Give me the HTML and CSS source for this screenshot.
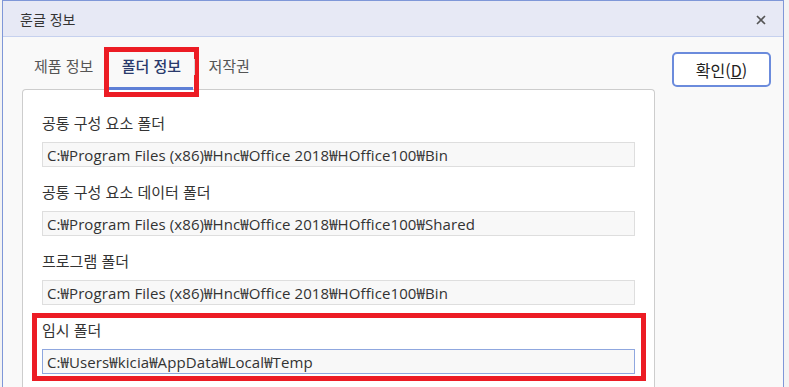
FILE: index.html
```html
<!DOCTYPE html>
<html lang="ko">
<head>
    <meta charset="UTF-8">
    <title>훈글 정보</title>
    <link rel="stylesheet" href="styles.css">
</head>
<body>
<div class="window">
    <div class="titlebar">
        <span class="title">훈글 정보</span>
        <svg class="close" width="10" height="10" viewBox="0 0 10 10">
            <path d="M1 1 L9 9 M9 1 L1 9" stroke="#555" stroke-width="1.6" fill="none"/>
        </svg>
    </div>

    <div class="content">
        <div class="main">
            <div class="tabs">
                <span class="tab">제품 정보</span>
                <span class="tab active mark-tab">폴더 정보</span>
                <span class="tab-sep"></span>
                <span class="tab last">저작권</span>
            </div>

            <div class="panel">
                <div class="field">
                    <label>공통 구성 요소 폴더</label>
                    <div class="path">C:₩Program Files (x86)₩Hnc₩Office 2018₩HOffice100₩Bin</div>
                </div>
                <div class="field">
                    <label>공통 구성 요소 데이터 폴더</label>
                    <div class="path">C:₩Program Files (x86)₩Hnc₩Office 2018₩HOffice100₩Shared</div>
                </div>
                <div class="field">
                    <label>프로그램 폴더</label>
                    <div class="path">C:₩Program Files (x86)₩Hnc₩Office 2018₩HOffice100₩Bin</div>
                </div>
                <div class="field mark-field">
                    <label>임시 폴더</label>
                    <div class="path focus">C:₩Users₩kicia₩AppData₩Local₩Temp</div>
                </div>
            </div>
        </div>

        <div class="side">
            <button class="ok">확인(<u>D</u>)</button>
        </div>
    </div>
</div>
</body>
</html>
```

FILE: styles.css
```css
html, body {
    margin: 0;
    height: 100%;
}
body {
    background-color: #f3f3f3;
    font-family: "Open Sans", "Noto Sans CJK KR", sans-serif;
    color: #222;
    overflow: hidden;
}
.window {
    margin-left: 2px;
    width: 782px;
    height: 100%;
    box-sizing: border-box;
    border: 1px solid #7f97d8;
    border-bottom: none;
    background-color: #f9f9f9;
    overflow: hidden;
}
.titlebar {
    height: 35px;
    display: flex;
    align-items: center;
    justify-content: space-between;
    padding: 0 17px 0 17px;
    background-color: #e7e9f5;
    border-bottom: 1px solid #c6d1ee;
}
.title {
    font-family: "Noto Sans CJK KR", sans-serif;
    font-size: 14px;
    color: #333;
}
.close {
    display: block;
    margin-top: 2px;
}
.content {
    display: flex;
}
.main {
    margin-left: 19px;
    width: 633px;
}
.tabs {
    display: flex;
    align-items: flex-start;
    padding-left: 1px;
    margin-bottom: -1px;
    position: relative;
    z-index: 1;
}
.tab {
    font-family: "Noto Sans CJK KR", sans-serif;
    font-size: 15px;
    color: #555;
    line-height: 22px;
    padding: 18px 11px 10px 11px;
    border-bottom: 3px solid transparent;
}
.tab.active {
    width: 84px;
    box-sizing: border-box;
    padding-left: 0;
    padding-right: 0;
    text-align: center;
    color: #2a3a6c;
    font-weight: 500;
    border-bottom-color: #5e7fd6;
    margin-left: 5px;
}
.tab-sep {
    width: 1px;
    height: 16px;
    margin: 22px 0 0 1px;
    background-color: #d6d6d6;
    position: relative;
    z-index: 2;
}
.tab.last {
    margin-left: 2px;
}
.panel {
    background-color: #fff;
    border: 1px solid #cdcdcd;
    border-bottom: none;
    border-radius: 4px 4px 0 0;
    height: 275px;
    padding: 22px 19px 0 19px;
}
.field {
    margin-bottom: 14px;
}
.field label {
    display: block;
    font-family: "Noto Sans CJK KR", sans-serif;
    font-size: 15px;
    line-height: 22px;
    margin-bottom: 8px;
    color: #333;
}
.path {
    height: 23px;
    line-height: 24px;
    padding-left: 4px;
    font-size: 15px;
    letter-spacing: 0.1px;
    color: #333;
    background-color: #f8f8f8;
    border: 1px solid #dedede;
    white-space: nowrap;
    overflow: hidden;
}
.path.focus {
    border-color: #8fa7df;
}
.side {
    padding: 15px 0 0 17px;
}
.ok {
    width: 99px;
    height: 35px;
    background-color: #fff;
    border: 2px solid #6b8bdc;
    border-radius: 5px;
    font-family: "Noto Sans CJK KR", sans-serif;
    font-size: 16px;
    color: #222;
    padding: 0;
}
.mark-tab, .mark-field {
    position: relative;
}
.mark-tab::after, .mark-field::after {
    content: "";
    position: absolute;
    border: 5px solid #ec1c24;
}
.mark-tab::after {
    left: -5px;
    right: -6px;
    top: 10px;
    bottom: -10px;
}
.mark-field::after {
    left: -10px;
    right: -11px;
    top: -6px;
    bottom: -7px;
}
```
